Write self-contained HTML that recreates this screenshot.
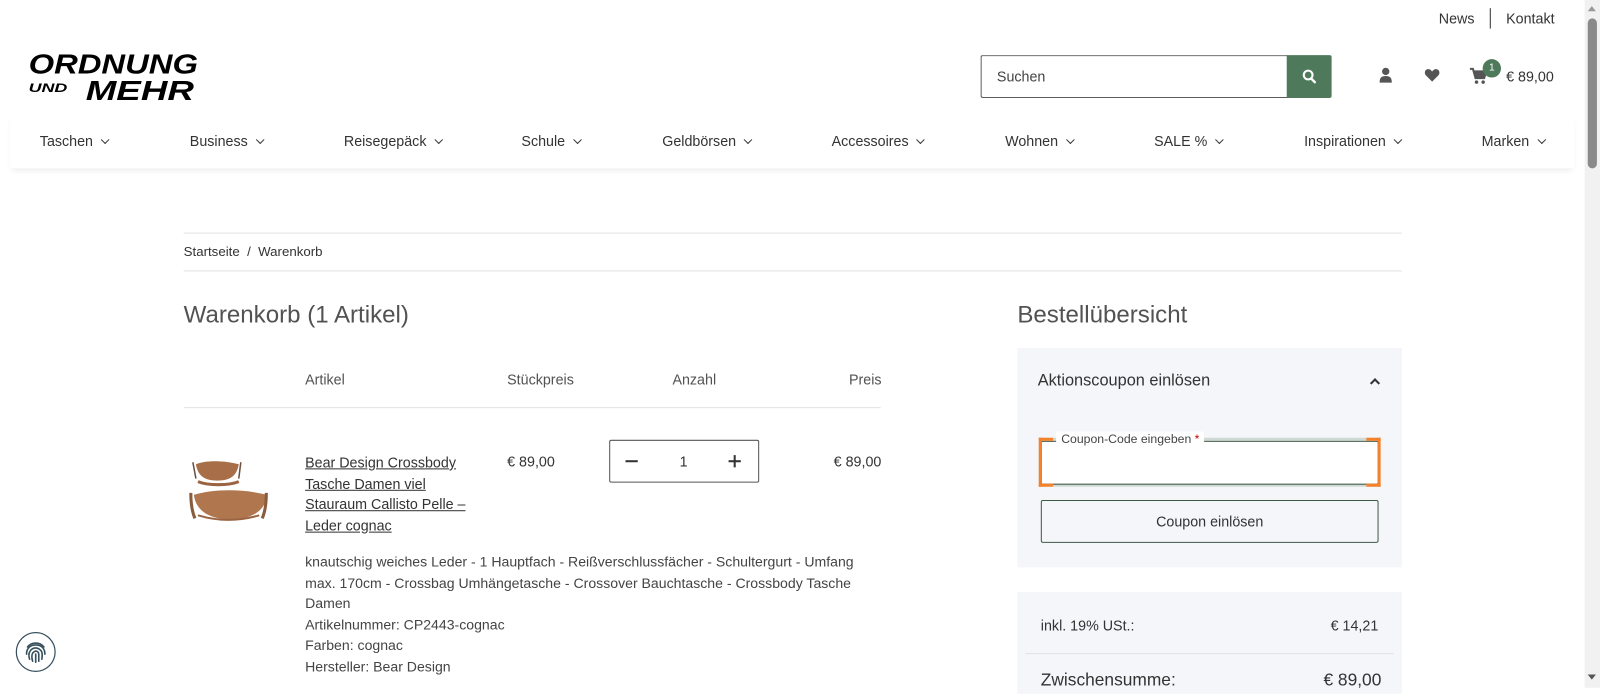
<!DOCTYPE html>
<html><head><meta charset="utf-8"><style>
*{box-sizing:border-box;margin:0;padding:0}
html,body{width:1600px;height:688px;overflow:hidden;background:#fff}
#w{position:absolute;left:0;top:0;width:1568px;height:674px;transform:scale(1.0204);transform-origin:0 0;font-family:"Liberation Sans",sans-serif;color:#525252;font-size:14px}
.a{position:absolute;white-space:nowrap}
.nav span{position:absolute;top:130px;font-size:14px;color:#333}
.nav span:after{content:"";display:inline-block;width:5px;height:5px;border-right:1.6px solid #333;border-bottom:1.6px solid #333;transform:rotate(45deg);margin-left:9px;position:relative;top:-3px}
</style></head><body><div id="w">
<div class="a" style="left:1410px;top:10px;color:#333">News</div>
<div class="a" style="left:1460px;top:8px;width:1px;height:20px;background:#333"></div>
<div class="a" style="left:1476px;top:10px;color:#333">Kontakt</div>
<svg class="a" style="left:28px;top:50px" width="168" height="52" viewBox="0 0 168 52">
<text x="0" y="22" font-family="Liberation Sans" font-weight="bold" font-style="italic" font-size="27" textLength="166" lengthAdjust="spacingAndGlyphs" fill="#000">ORDNUNG</text>
<text x="0" y="40" font-family="Liberation Sans" font-weight="bold" font-style="italic" font-size="12" textLength="38" lengthAdjust="spacingAndGlyphs" fill="#000">UND</text>
<text x="56" y="48" font-family="Liberation Sans" font-weight="bold" font-style="italic" font-size="27" textLength="106" lengthAdjust="spacingAndGlyphs" fill="#000">MEHR</text>
</svg>
<div class="a" style="left:961px;top:54px;width:301px;height:42px;border:1px solid #555;border-right:none;border-radius:2px 0 0 2px;padding:12px 15px;color:#444">Suchen</div>
<div class="a" style="left:1261px;top:54px;width:44px;height:42px;background:#4e7a5b;border-radius:0 2px 2px 0"><svg width="44" height="42"><circle cx="21" cy="19.5" r="4.3" stroke="#fff" stroke-width="2" fill="none"/><path d="M24 23l3.5 3.5" stroke="#fff" stroke-width="2.4" stroke-linecap="round"/></svg></div>
<svg class="a" style="left:1351px;top:66px" width="14" height="16"><circle cx="7" cy="4" r="3.6" fill="#555"/><path d="M1 15c0-5 2-6.5 6-6.5s6 1.5 6 6.5z" fill="#555"/></svg>
<svg class="a" style="left:1396px;top:67px" width="15" height="14"><path d="M7.5 13L1.5 7C-1 4 1 0.5 4 0.8c1.7.2 2.8 1.3 3.5 2.4C8.2 2.1 9.3 1 11 .8c3-.3 5 3.2 2.5 6.2z" fill="#555"/></svg>
<svg class="a" style="left:1440px;top:66px" width="18" height="17"><path d="M0.5 1.5h3l2.5 9h8.5l2-6.5H5" stroke="#555" stroke-width="2" fill="none"/><path d="M4.5 4h11.5l-2 6.5H6.5z" fill="#555"/><circle cx="7" cy="14.5" r="1.7" fill="#555"/><circle cx="13.5" cy="14.5" r="1.7" fill="#555"/></svg>
<div class="a" style="left:1453px;top:58px;width:18px;height:18px;border-radius:50%;background:#4e7a5b;color:#fff;font-size:10px;text-align:center;line-height:18px">1</div>
<div class="a" style="left:1476px;top:67px;color:#333">€ 89,00</div>
<div class="a" style="left:10px;top:112px;width:1533px;height:53px;background:#fff;box-shadow:0 4px 6px -2px rgba(0,0,0,.08)"></div>
<div class="nav">
<span style="left:39px">Taschen</span><span style="left:186px">Business</span><span style="left:337px">Reisegepäck</span><span style="left:511px">Schule</span><span style="left:649px">Geldbörsen</span><span style="left:815px">Accessoires</span><span style="left:985px">Wohnen</span><span style="left:1131px">SALE %</span><span style="left:1278px">Inspirationen</span><span style="left:1452px">Marken</span>
</div>
<div class="a" style="left:1553px;top:0;width:15px;height:674px;background:#f1f1f1"></div>
<div class="a" style="left:1556px;top:18px;width:9px;height:147px;background:#8a8a8a;border-radius:5px"></div>
<div class="a" style="left:1556px;top:6px;border:4px solid transparent;border-bottom:5px solid #999;border-top:none"></div>
<div class="a" style="left:1556px;top:661px;border:4px solid transparent;border-top:5px solid #555;border-bottom:none"></div>
<div class="a" style="left:180px;top:228px;width:1194px;height:1px;background:#e2e2e2"></div>
<div class="a" style="left:180px;top:265px;width:1194px;height:1px;background:#e2e2e2"></div>
<div class="a" style="left:180px;top:239px;font-size:13px;color:#333">Startseite &nbsp;/&nbsp; Warenkorb</div>
<div class="a" style="left:180px;top:296px;font-size:23.6px">Warenkorb (1 Artikel)</div>
<div class="a" style="left:299px;top:364px">Artikel</div>
<div class="a" style="left:497px;top:364px">Stückpreis</div>
<div class="a" style="left:659px;top:364px">Anzahl</div>
<div class="a" style="left:832px;top:364px">Preis</div>
<div class="a" style="left:180px;top:399px;width:683px;height:1px;background:#e2e2e2"></div>
<svg class="a" style="left:184px;top:445px" width="80" height="70">
<path d="M8 10c8-4 28-4 42 0-2 12-9 16-21 16S10 22 8 10z" fill="#a86e48"/>
<path d="M5 8l3 16M52 8l-2 16" stroke="#6a5040" stroke-width="1.5"/>
<path d="M10 27c10 4 30 4 40 0" stroke="#9a6442" stroke-width="3" fill="none"/>
<path d="M6 40c20-6 48-6 72 0-2 16-16 24-36 24S8 56 6 40z" fill="#b0764e"/>
<path d="M3 38c0 10 1 18 4 25M77 38c0 10-1 18-4 25" stroke="#8a5c3e" stroke-width="3" fill="none"/>
<path d="M10 60c20 6 40 6 60 0" stroke="#9a6442" stroke-width="2" fill="none"/>
</svg>
<div class="a" style="left:299px;top:443px;line-height:20.5px;color:#333;text-decoration:underline;white-space:normal;width:170px">Bear Design Crossbody Tasche Damen viel Stauraum Callisto Pelle – Leder cognac</div>
<div class="a" style="left:497px;top:444px;color:#333">€ 89,00</div>
<div class="a" style="left:597px;top:431px;width:147px;height:42px;border:1px solid #555;border-radius:2px"></div>
<div class="a" style="left:613px;top:451px;width:12px;height:2px;background:#333"></div>
<div class="a" style="left:714px;top:451px;width:12px;height:2px;background:#333"></div>
<div class="a" style="left:719px;top:446px;width:2px;height:12px;background:#333"></div>
<div class="a" style="left:666px;top:444px;color:#333">1</div>
<div class="a" style="left:817px;top:444px;color:#333">€ 89,00</div>
<div class="a" style="left:299px;top:541px;line-height:20.5px;white-space:normal;width:560px;color:#444;font-size:13.8px">knautschig weiches Leder - 1 Hauptfach - Reißverschlussfächer - Schultergurt - Umfang max. 170cm - Crossbag Umhängetasche - Crossover Bauchtasche - Crossbody Tasche Damen<br>Artikelnummer: CP2443-cognac<br>Farben: cognac<br>Hersteller: Bear Design</div>
<div class="a" style="left:997px;top:296px;font-size:23.6px">Bestellübersicht</div>
<div class="a" style="left:997px;top:341px;width:377px;height:215px;background:#f5f6f9"></div>
<div class="a" style="left:1017px;top:365px;font-size:16px;color:#333">Aktionscoupon einlösen</div>
<div class="a" style="left:1344px;top:372px;width:7px;height:7px;border-left:2px solid #333;border-top:2px solid #333;transform:rotate(45deg)"></div>
<div class="a" style="left:1018px;top:429px;width:335px;height:48px;background:#cfd9d3"></div>
<div class="a" style="left:1020px;top:432px;width:331px;height:43px;background:#fff;border:1px solid #4a5e50;border-radius:2px"></div>
<div class="a" style="left:1018px;top:429px;width:14px;height:48px;border-left:3px solid #f5822a;border-top:3px solid #f5822a;border-bottom:3px solid #f5822a"></div>
<div class="a" style="left:1339px;top:429px;width:14px;height:48px;border-right:3px solid #f5822a;border-top:3px solid #f5822a;border-bottom:3px solid #f5822a"></div>
<div class="a" style="left:1022px;top:436px;width:8px;height:26px;background:#fff"></div>
<div class="a" style="left:1035px;top:423px;padding:0 5px;background:#fff;font-size:12px;color:#444">Coupon-Code eingeben <span style="color:#c00">*</span></div>
<div class="a" style="left:1020px;top:490px;width:331px;height:42px;border:1px solid #3d5a45;border-radius:2px;text-align:center;line-height:40px;color:#333">Coupon einlösen</div>
<div class="a" style="left:997px;top:580px;width:377px;height:100px;background:#f5f6f9"></div>
<div class="a" style="left:1020px;top:605px;color:#333">inkl. 19% USt.:</div>
<div class="a" style="left:1304px;top:605px;color:#333">€ 14,21</div>
<div class="a" style="left:1005px;top:640px;width:361px;height:1px;background:#e2e2e2"></div>
<div class="a" style="left:1020px;top:657px;font-size:17px;color:#333">Zwischensumme:</div>
<div class="a" style="left:1297px;top:657px;font-size:17px;color:#333">€ 89,00</div>
<svg class="a" style="left:15px;top:619px" width="40" height="40"><circle cx="20" cy="20" r="19" fill="#fff" stroke="#38505e" stroke-width="1.2"/>
<g fill="none" stroke="#38505e" stroke-width="1.6" stroke-linecap="round"><path d="M12 15c4-5 12-5 16 0"/><path d="M11 22c0-6 4-9 9-9s9 3 9 9"/><path d="M14 27c-1-3-1-5 0-7 1.5-3 4-4 6-4s5 1.5 6 4c.5 2 .5 4 0 7"/><path d="M17 29c-1-3-1-6 0-8 1-1 2-2 3-2s3 1 3 3v7"/><path d="M20 22v8"/></g></svg>
</div></body></html>
